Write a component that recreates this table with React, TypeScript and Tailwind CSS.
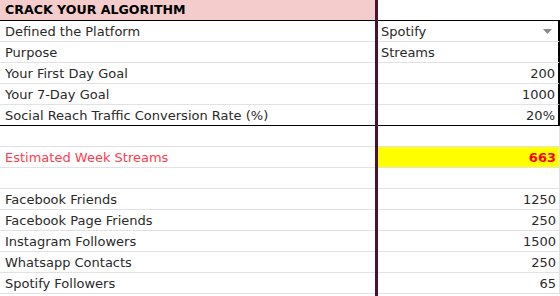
type Row = {
  label?: string
  value?: string
  align?: 'left' | 'right'
  dropdown?: boolean
  highlight?: boolean
  boxed?: boolean
  last?: boolean
}

const rows: Row[] = [
  { label: 'Defined the Platform', value: 'Spotify', dropdown: true, boxed: true },
  { label: 'Purpose', value: 'Streams', boxed: true },
  { label: 'Your First Day Goal', value: '200', align: 'right', boxed: true },
  { label: 'Your 7-Day Goal', value: '1000', align: 'right', boxed: true },
  { label: 'Social Reach Traffic Conversion Rate (%)', value: '20%', align: 'right', boxed: true, last: true },
  {},
  { label: 'Estimated Week Streams', value: '663', align: 'right', highlight: true },
  {},
  { label: 'Facebook Friends', value: '1250', align: 'right' },
  { label: 'Facebook Page Friends', value: '250', align: 'right' },
  { label: 'Instagram Followers', value: '1500', align: 'right' },
  { label: 'Whatsapp Contacts', value: '250', align: 'right' },
  { label: 'Spotify Followers', value: '65', align: 'right' },
]

function SheetRow({ row }: { row: Row }) {
  const bottom = row.last ? 'border-black' : 'border-[#e2e2e2]'
  return (
    <div className="flex h-[21px]">
      <div
        className={`w-[375px] border-b ${bottom} px-[5px] pt-px leading-[19px] whitespace-nowrap ${
          row.highlight ? 'text-[#ff3d4f]' : 'text-[#2a2a2a]'
        }`}
      >
        {row.label}
      </div>
      <div className="w-[3px] bg-[#4c1130]" />
      <div
        className={`flex flex-1 items-center border-b ${bottom} pt-px ${
          row.boxed ? 'border-r-2 border-r-black' : 'border-r border-r-[#e2e2e2]'
        } ${row.highlight ? 'bg-[#ffff00] font-bold text-[#ff0000]' : 'text-[#2a2a2a]'} ${
          row.align === 'right' ? 'justify-end pr-[3px]' : 'pl-[3px] pr-[6px]'
        }`}
      >
        <span className="leading-[19px]">{row.value}</span>
        {row.dropdown && (
          <svg className="ml-auto" width="9" height="5" viewBox="0 0 9 5">
            <path d="M0 0h9L4.5 5z" fill="#8a8a8a" />
          </svg>
        )}
      </div>
    </div>
  )
}

export default function App() {
  return (
    <div className="h-[296px] w-[560px] overflow-hidden bg-white font-['DejaVu_Sans',sans-serif] text-[13px]">
      {/* header */}
      <div className="flex h-[21px]">
        <div className="w-[375px] border-b border-black bg-[#f4cccc] px-[5px] text-[12.6px] leading-[20px] font-bold text-black">
          CRACK YOUR ALGORITHM
        </div>
        <div className="w-[3px] bg-[#4c1130]" />
        <div className="flex-1 border-b border-black" />
      </div>
      {rows.map((row, i) => (
        <SheetRow key={i} row={row} />
      ))}
      <div className="flex h-[3px]">
        <div className="w-[375px]" />
        <div className="w-[3px] bg-[#4c1130]" />
      </div>
    </div>
  )
}
